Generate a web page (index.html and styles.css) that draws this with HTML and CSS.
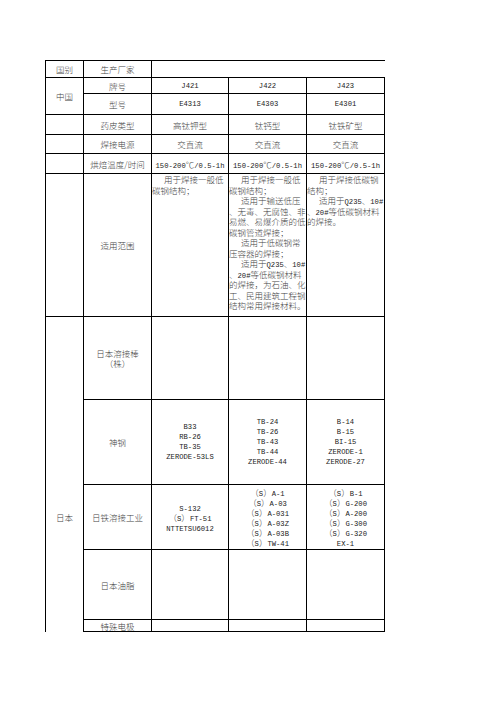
FILE: index.html
```html
<!DOCTYPE html>
<html lang="zh-CN">
<head>
<meta charset="utf-8">
<title>焊条对照表</title>
<link rel="stylesheet" href="styles.css">
</head>
<body>
<div class="sheet">
  <div class="c">国别</div>
  <div class="c">生产厂家</div>
  <div class="c span3 noright"></div>

  <div class="c rs2">中国</div>
  <div class="c">牌号</div>
  <div class="c m">J421</div>
  <div class="c m">J422</div>
  <div class="c m">J423</div>

  <div class="c">型号</div>
  <div class="c m">E4313</div>
  <div class="c m">E4303</div>
  <div class="c m">E4301</div>

  <div class="c"></div>
  <div class="c">药皮类型</div>
  <div class="c">高钛钾型</div>
  <div class="c">钛钙型</div>
  <div class="c">钛铁矿型</div>

  <div class="c"></div>
  <div class="c">焊接电源</div>
  <div class="c">交直流</div>
  <div class="c">交直流</div>
  <div class="c">交直流</div>

  <div class="c"></div>
  <div class="c">烘焙温度/时间</div>
  <div class="c"><div class="t"><div class="ln"><span class="m">150-200</span>℃<span class="m">/0.5-1h</span></div></div></div>
  <div class="c"><div class="t"><div class="ln"><span class="m">150-200</span>℃<span class="m">/0.5-1h</span></div></div></div>
  <div class="c"><div class="t"><div class="ln"><span class="m">150-200</span>℃<span class="m">/0.5-1h</span></div></div></div>

  <div class="c"></div>
  <div class="c">适用范围</div>
  <div class="c para">
    <div class="ln ind">用于焊接一般低</div>
    <div class="ln">碳钢结构；</div>
  </div>
  <div class="c para">
    <div class="ln ind">用于焊接一般低</div>
    <div class="ln">碳钢结构；</div>
    <div class="ln ind">适用于输送低压</div>
    <div class="ln">、无毒、无腐蚀、非</div>
    <div class="ln">易燃、易爆介质的低</div>
    <div class="ln">碳钢管道焊接；</div>
    <div class="ln ind">适用于低碳钢常</div>
    <div class="ln">压容器的焊接；</div>
    <div class="ln ind">适用于<span class="m">Q235</span>、<span class="m">10#</span></div>
    <div class="ln">、<span class="m">20#</span>等低碳钢材料</div>
    <div class="ln">的焊接，为石油、化</div>
    <div class="ln">工、民用建筑工程钢</div>
    <div class="ln">结构常用焊接材料。</div>
  </div>
  <div class="c para">
    <div class="ln ind">用于焊接低碳钢</div>
    <div class="ln">结构；</div>
    <div class="ln ind">适用于<span class="m">Q235</span>、<span class="m">10#</span></div>
    <div class="ln">、<span class="m">20#</span>等低碳钢材料</div>
    <div class="ln">的焊接。</div>
  </div>

  <div class="c rs5 nobottom top">日本</div>
  <div class="c"><div class="t"><div class="ln">日本溶接棒</div><div class="ln">（株）</div></div></div>
  <div class="c"></div>
  <div class="c"></div>
  <div class="c"></div>

  <div class="c">神钢</div>
  <div class="c m"><div class="t"><div class="ln">B33</div><div class="ln">RB-26</div><div class="ln">TB-35</div><div class="ln">ZERODE-53LS</div></div></div>
  <div class="c m"><div class="t"><div class="ln">TB-24</div><div class="ln">TB-26</div><div class="ln">TB-43</div><div class="ln">TB-44</div><div class="ln">ZERODE-44</div></div></div>
  <div class="c m"><div class="t"><div class="ln">B-14</div><div class="ln">B-15</div><div class="ln">BI-15</div><div class="ln">ZERODE-1</div><div class="ln">ZERODE-27</div></div></div>

  <div class="c">日铁溶接工业</div>
  <div class="c"><div class="t">
    <div class="ln"><span class="m">S-132</span></div>
    <div class="ln">（<span class="m">S</span>）<span class="m">FT-51</span></div>
    <div class="ln"><span class="m">NTTETSU6012</span></div>
  </div></div>
  <div class="c"><div class="t">
    <div class="ln">（<span class="m">S</span>）<span class="m">A-1</span></div>
    <div class="ln">（<span class="m">S</span>）<span class="m">A-03</span></div>
    <div class="ln">（<span class="m">S</span>）<span class="m">A-031</span></div>
    <div class="ln">（<span class="m">S</span>）<span class="m">A-03Z</span></div>
    <div class="ln">（<span class="m">S</span>）<span class="m">A-03B</span></div>
    <div class="ln">（<span class="m">S</span>）<span class="m">TW-41</span></div>
  </div></div>
  <div class="c"><div class="t">
    <div class="ln">（<span class="m">S</span>）<span class="m">B-1</span></div>
    <div class="ln">（<span class="m">S</span>）<span class="m">G-200</span></div>
    <div class="ln">（<span class="m">S</span>）<span class="m">A-200</span></div>
    <div class="ln">（<span class="m">S</span>）<span class="m">G-300</span></div>
    <div class="ln">（<span class="m">S</span>）<span class="m">G-320</span></div>
    <div class="ln"><span class="m">EX-1</span></div>
  </div></div>

  <div class="c">日本油脂</div>
  <div class="c"></div>
  <div class="c"></div>
  <div class="c"></div>

  <div class="c">特殊电极</div>
  <div class="c"></div>
  <div class="c"></div>
  <div class="c"></div>
</div>
</body>
</html>
```

FILE: styles.css
```css
html, body {
  margin: 0;
  padding: 0;
  background: #fff;
}

.sheet {
  display: grid;
  grid-template-columns: 38px 68px 77px 78px 78px;
  grid-template-rows: 17px 16px 21px 20px 19px 20px 143px 83px 85px 65px 70px 12px;
  width: max-content;
  margin: 60px 0 0 45px;
  border-top: 1px solid #000;
  border-left: 1px solid #000;
  font-family: "Noto Sans CJK SC", "Noto Sans", sans-serif;
  font-size: 8.5px;
  line-height: 10px;
  font-weight: 300;
  color: #444;
}

.c {
  box-sizing: border-box;
  border-right: 1px solid #000;
  border-bottom: 1px solid #000;
  display: flex;
  align-items: center;
  justify-content: center;
  text-align: center;
  white-space: nowrap;
  overflow: visible;
}

.t {
  display: flex;
  flex-direction: column;
  align-items: stretch;
}

.ln {
  display: block;
  height: 10px;
  line-height: 10px;
  text-align: center;
  white-space: nowrap;
}

.span3 {
  grid-column: span 3;
}

.noright {
  border-right: none;
}

.rs2 {
  grid-row: span 2;
}

.rs5 {
  grid-row: span 5;
}

.nobottom {
  border-bottom: none;
}

.top {
  align-items: flex-start;
  padding-top: 195px;
}

.m {
  font-family: "Liberation Mono", "DejaVu Sans Mono", monospace;
  font-size: 7.2px;
  font-weight: normal;
  color: #222;
}

.para {
  flex-direction: column;
  align-items: stretch;
  justify-content: flex-start;
  text-align: left;
}

.para .ln {
  height: 10.5px;
  line-height: 10.5px;
  text-align: left;
}

.para .ind {
  padding-left: 12px;
}
```
